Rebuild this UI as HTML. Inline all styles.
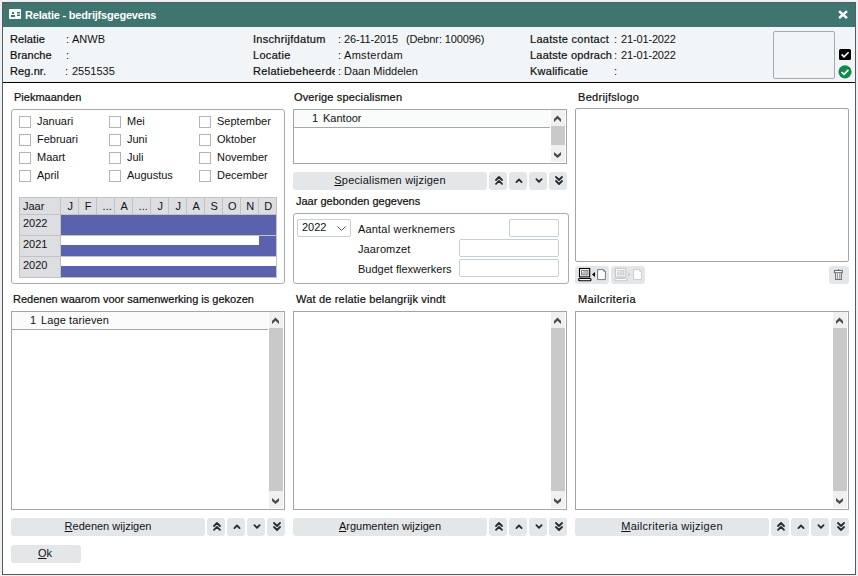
<!DOCTYPE html>
<html><head><meta charset="utf-8"><style>
*{box-sizing:border-box;margin:0;padding:0}
html,body{width:858px;height:576px;overflow:hidden;background:#eef1f4;font-family:"Liberation Sans",sans-serif;font-size:11px;color:#111;}
.a{position:absolute}
.t{position:absolute;line-height:13px;white-space:nowrap}
.m{-webkit-text-stroke-width:0.22px}
.gbox{position:absolute;border:1px solid #ababab;border-radius:3px}
.cb{position:absolute;width:12px;height:12px;border:1px solid #b4b4b4;background:#fff}
.lst{position:absolute;border:1px solid #a4a4a4;background:#fff}
.btn{position:absolute;background:#e3e7ea;border-radius:3px;height:18px;line-height:16px;text-align:center;white-space:nowrap}
.sbtn{position:absolute;background:#e3e7ea;border-radius:3px;height:18px;width:18px}
.inp{position:absolute;border:1px solid #c7cfd7;border-radius:2px;background:#fff}
.u{text-decoration:underline;text-underline-offset:1px}
svg{position:absolute;overflow:visible}
</style></head><body>
<div class="a" style="left:2px;top:2px;width:854px;height:573px;border:1px solid #5a5a5a;background:#fff"></div>
<div class="a" style="left:3px;top:3px;width:852px;height:24px;background:#3e756e"></div>
<div class="a" style="left:3px;top:27px;width:852px;height:55px;background:#f2f5f8"></div>
<div class="a" style="left:3px;top:82px;width:852px;height:1px;background:#000"></div>
<svg style="left:9px;top:9px" width="12" height="10" viewBox="0 0 12 10"><rect x="0" y="0" width="12" height="10" rx="1" fill="#fff"/><rect x="3" y="3" width="2" height="2" fill="#3e756e"/><rect x="2" y="6" width="4" height="2" fill="#3e756e"/><rect x="8" y="3" width="3" height="1" fill="#3e756e"/><rect x="8" y="4" width="3" height="2" fill="#9dbab6"/><rect x="8" y="6" width="3" height="1" fill="#3e756e"/></svg>
<div class="t" style="left:25px;top:9px;color:#fff;font-weight:bold;letter-spacing:-0.2px;-webkit-text-stroke-width:0">Relatie - bedrijfsgegevens</div>
<svg style="left:838px;top:10px" width="10" height="9" viewBox="0 0 10 9"><path d="M1.1 1.1 L9 8.1 M9 1.1 L1.1 8.1" stroke="#fff" stroke-width="2.6" stroke-linecap="butt"/></svg>
<div class="t m" style="left:10px;top:33px;letter-spacing:0.1px;">Relatie</div>
<div class="t" style="left:66px;top:33px;">:</div>
<div class="t" style="left:72px;top:33px;">ANWB</div>
<div class="t m" style="left:10px;top:49px;letter-spacing:0.1px;">Branche</div>
<div class="t" style="left:66px;top:49px;">:</div>
<div class="t m" style="left:10px;top:65px;letter-spacing:0.1px;">Reg.nr.</div>
<div class="t" style="left:65px;top:65px;">:</div>
<div class="t" style="left:72px;top:65px;">2551535</div>
<div class="t" style="left:406px;top:33px;letter-spacing:-0.12px;">(Debnr: 100096)</div>
<div class="t m" style="left:253px;top:33px;width:82px;overflow:hidden;letter-spacing:0.3px">Inschrijfdatum</div>
<div class="t" style="left:338px;top:33px;">:</div>
<div class="t" style="left:344px;top:33px;letter-spacing:-0.15px;">26-11-2015</div>
<div class="t m" style="left:253px;top:49px;width:82px;overflow:hidden;letter-spacing:0.3px">Locatie</div>
<div class="t" style="left:338px;top:49px;">:</div>
<div class="t" style="left:344px;top:49px;letter-spacing:0.3px;">Amsterdam</div>
<div class="t m" style="left:253px;top:65px;width:82px;overflow:hidden;letter-spacing:0.3px">Relatiebeheerder</div>
<div class="t" style="left:338px;top:65px;">:</div>
<div class="t" style="left:344px;top:65px;">Daan Middelen</div>
<div class="t m" style="left:530px;top:33px;letter-spacing:0.3px">Laatste contact</div>
<div class="t" style="left:614px;top:33px;">:</div>
<div class="t" style="left:621px;top:33px;letter-spacing:-0.15px;">21-01-2022</div>
<div class="t m" style="left:530px;top:49px;letter-spacing:0.22px">Laatste opdrach</div>
<div class="t" style="left:614px;top:49px;">:</div>
<div class="t" style="left:621px;top:49px;letter-spacing:-0.15px;">21-01-2022</div>
<div class="t m" style="left:530px;top:65px;letter-spacing:0.25px">Kwalificatie</div>
<div class="t" style="left:614px;top:65px;">:</div>
<div class="a" style="left:773px;top:31px;width:62px;height:48px;border:1px solid #a9a9a9;border-radius:2px"></div>
<svg style="left:839px;top:49px" width="12" height="11" viewBox="0 0 12 11"><rect x="0" y="0" width="12" height="11" rx="1.5" fill="#000"/><path d="M2.6 5.4 L5 7.8 L9.6 3.2" stroke="#fff" stroke-width="1.6" fill="none"/></svg>
<svg style="left:838px;top:65px" width="14" height="14" viewBox="0 0 14 14"><circle cx="7" cy="6.8" r="6.6" fill="#118a4a"/><path d="M3.6 7 L6 9.3 L10.4 4.9" stroke="#fff" stroke-width="1.7" fill="none"/></svg>
<div class="t m" style="left:14px;top:91px;">Piekmaanden</div>
<div class="gbox" style="left:11px;top:109px;width:274px;height:175px"></div>
<div class="cb" style="left:19px;top:116px"></div>
<div class="t" style="left:37px;top:115px;">Januari</div>
<div class="cb" style="left:19px;top:134px"></div>
<div class="t" style="left:37px;top:133px;">Februari</div>
<div class="cb" style="left:19px;top:152px"></div>
<div class="t" style="left:37px;top:151px;">Maart</div>
<div class="cb" style="left:19px;top:170px"></div>
<div class="t" style="left:37px;top:169px;">April</div>
<div class="cb" style="left:109px;top:116px"></div>
<div class="t" style="left:127px;top:115px;">Mei</div>
<div class="cb" style="left:109px;top:134px"></div>
<div class="t" style="left:127px;top:133px;">Juni</div>
<div class="cb" style="left:109px;top:152px"></div>
<div class="t" style="left:127px;top:151px;">Juli</div>
<div class="cb" style="left:109px;top:170px"></div>
<div class="t" style="left:127px;top:169px;">Augustus</div>
<div class="cb" style="left:199px;top:116px"></div>
<div class="t" style="left:217px;top:115px;">September</div>
<div class="cb" style="left:199px;top:134px"></div>
<div class="t" style="left:217px;top:133px;">Oktober</div>
<div class="cb" style="left:199px;top:152px"></div>
<div class="t" style="left:217px;top:151px;">November</div>
<div class="cb" style="left:199px;top:170px"></div>
<div class="t" style="left:217px;top:169px;">December</div>
<div class="a" style="left:19px;top:197px;width:258px;height:81px;background:#fff;border:1px solid #c2c2c2"></div>
<div class="a" style="left:20px;top:198px;width:256px;height:16px;background:#dddee2"></div>
<div class="a" style="left:20px;top:215px;width:40px;height:62px;background:#dddee2"></div>
<div class="a" style="left:19px;top:214px;width:258px;height:1px;background:#c2c2c2"></div>
<div class="a" style="left:19px;top:235px;width:42px;height:1px;background:#c2c2c2"></div>
<div class="a" style="left:19px;top:256px;width:42px;height:1px;background:#c2c2c2"></div>
<div class="a" style="left:60px;top:197px;width:1px;height:81px;background:#c2c2c2"></div>
<div class="a" style="left:78px;top:197px;width:1px;height:18px;background:#c2c2c2"></div>
<div class="a" style="left:96px;top:197px;width:1px;height:18px;background:#c2c2c2"></div>
<div class="a" style="left:114px;top:197px;width:1px;height:18px;background:#c2c2c2"></div>
<div class="a" style="left:132px;top:197px;width:1px;height:18px;background:#c2c2c2"></div>
<div class="a" style="left:150px;top:197px;width:1px;height:18px;background:#c2c2c2"></div>
<div class="a" style="left:168px;top:197px;width:1px;height:18px;background:#c2c2c2"></div>
<div class="a" style="left:186px;top:197px;width:1px;height:18px;background:#c2c2c2"></div>
<div class="a" style="left:204px;top:197px;width:1px;height:18px;background:#c2c2c2"></div>
<div class="a" style="left:222px;top:197px;width:1px;height:18px;background:#c2c2c2"></div>
<div class="a" style="left:240px;top:197px;width:1px;height:18px;background:#c2c2c2"></div>
<div class="a" style="left:258px;top:197px;width:1px;height:18px;background:#c2c2c2"></div>
<div class="a" style="left:61px;top:215px;width:215px;height:20px;background:#5a62ad"></div>
<div class="a" style="left:61px;top:236px;width:215px;height:20px;background:#5a62ad"></div>
<div class="a" style="left:61px;top:236px;width:198px;height:9px;background:#fff"></div>
<div class="a" style="left:61px;top:257px;width:215px;height:20px;background:#5a62ad"></div>
<div class="a" style="left:61px;top:257px;width:215px;height:9px;background:#fff"></div>
<div class="a" style="left:61px;top:235px;width:215px;height:1px;background:#c2c2c2"></div>
<div class="a" style="left:61px;top:256px;width:215px;height:1px;background:#c2c2c2"></div>
<div class="t" style="left:23px;top:200px;">Jaar</div>
<div class="t" style="left:61.7px;top:200px;width:17px;text-align:center">J</div>
<div class="t" style="left:79.7px;top:200px;width:17px;text-align:center">F</div>
<div class="t" style="left:98.7px;top:200px;width:17px;text-align:center">...</div>
<div class="t" style="left:115.7px;top:200px;width:17px;text-align:center">A</div>
<div class="t" style="left:134.7px;top:200px;width:17px;text-align:center">...</div>
<div class="t" style="left:151.7px;top:200px;width:17px;text-align:center">J</div>
<div class="t" style="left:169.7px;top:200px;width:17px;text-align:center">J</div>
<div class="t" style="left:187.7px;top:200px;width:17px;text-align:center">A</div>
<div class="t" style="left:205.7px;top:200px;width:17px;text-align:center">S</div>
<div class="t" style="left:223.7px;top:200px;width:17px;text-align:center">O</div>
<div class="t" style="left:241.7px;top:200px;width:17px;text-align:center">N</div>
<div class="t" style="left:259.7px;top:200px;width:17px;text-align:center">D</div>
<div class="t" style="left:23px;top:217px;">2022</div>
<div class="t" style="left:23px;top:238px;">2021</div>
<div class="t" style="left:23px;top:259px;">2020</div>
<div class="t m" style="left:294px;top:91px;letter-spacing:0.15px;">Overige specialismen</div>
<div class="lst" style="left:293px;top:109px;width:274px;height:55px"></div>
<div class="a" style="left:551px;top:110px;width:14px;height:52px;background:#f0f0f0"></div>
<div class="a" style="left:551px;top:126px;width:14px;height:19px;background:#c9c9c9"></div>
<svg style="left:551px;top:109px" width="14" height="16" viewBox="551 109 14 16"><path d="M554 119 L557.5 115.6 L561 119 V122 L557.5 118.7 L554 122 Z" fill="#4a4a4a"/></svg>
<svg style="left:551px;top:148px" width="14" height="16" viewBox="551 148 14 16"><path d="M554 152 L557.5 155.1 L561 152 V155 L557.5 158 L554 155 Z" fill="#4a4a4a"/></svg>
<div class="a" style="left:294px;top:110px;width:256px;height:17px;background:#fafbfb"></div>
<div class="a" style="left:294px;top:127px;width:256px;height:1px;background:#a8a8a8"></div>
<div class="t" style="left:312px;top:112px;">1</div>
<div class="t" style="left:323px;top:112px;">Kantoor</div>
<div class="btn" style="left:293px;top:172px;width:194px"><span style="letter-spacing:0.18px"><span class="u">S</span>pecialismen wijzigen</span></div>
<div class="sbtn" style="left:489px;top:172px"></div>
<svg style="left:494.5px;top:176px" width="8" height="10" viewBox="0 0 8 10"><path d="M1 4 L4 1 L7 4 M1 7.8 L4 4.8 L7 7.8" stroke="#262c31" stroke-width="1.8" stroke-linecap="round" stroke-linejoin="round" fill="none"/></svg>
<div class="sbtn" style="left:509px;top:172px"></div>
<svg style="left:514.5px;top:176px" width="8" height="10" viewBox="0 0 8 10"><path d="M1.4 6.1 L4 3.5 L6.6 6.1" stroke="#262c31" stroke-width="1.8" stroke-linecap="round" stroke-linejoin="round" fill="none"/></svg>
<div class="sbtn" style="left:529px;top:172px"></div>
<svg style="left:534.5px;top:176px" width="8" height="10" viewBox="0 0 8 10"><path d="M1.4 3.2 L4 5.8 L6.6 3.2" stroke="#262c31" stroke-width="1.8" stroke-linecap="round" stroke-linejoin="round" fill="none"/></svg>
<div class="sbtn" style="left:549px;top:172px"></div>
<svg style="left:554.5px;top:176px" width="8" height="10" viewBox="0 0 8 10"><path d="M1 1 L4 4 L7 1 M1 5 L4 8 L7 5" stroke="#262c31" stroke-width="1.8" stroke-linecap="round" stroke-linejoin="round" fill="none"/></svg>
<div class="t m" style="left:296px;top:195px;">Jaar gebonden gegevens</div>
<div class="gbox" style="left:293px;top:213px;width:276px;height:71px"></div>
<div class="inp" style="left:297px;top:219px;width:54px;height:18px"></div>
<div class="t" style="left:302px;top:221px;">2022</div>
<svg style="left:337px;top:226px" width="9" height="5" viewBox="0 0 9 5"><path d="M0.5 0.5 L4.5 4.5 L8.5 0.5" stroke="#555" stroke-width="1" fill="none"/></svg>
<div class="t" style="left:358px;top:223px;letter-spacing:0.18px;">Aantal werknemers</div>
<div class="t" style="left:358px;top:243px;letter-spacing:0.12px;">Jaaromzet</div>
<div class="t" style="left:358px;top:263px;">Budget flexwerkers</div>
<div class="inp" style="left:509px;top:219px;width:50px;height:18px"></div>
<div class="inp" style="left:459px;top:239px;width:100px;height:18px"></div>
<div class="inp" style="left:459px;top:259px;width:100px;height:18px"></div>
<div class="t m" style="left:578px;top:91px;letter-spacing:0.3px;">Bedrijfslogo</div>
<div class="a" style="left:575px;top:108px;width:274px;height:154px;border:1px solid #a4a4a4;border-radius:2px;background:#fff"></div>
<div class="sbtn" style="left:575px;top:266px;width:34px"></div>
<div class="sbtn" style="left:611px;top:266px;width:34px"></div>
<div class="sbtn" style="left:829px;top:266px;width:20px"></div>
<svg style="left:576px;top:265px" width="32" height="18" viewBox="0 0 32 18"><rect x="3.5" y="3.5" width="10.2" height="8.4" fill="#fff" stroke="#000" stroke-width="1.1"/><rect x="5.5" y="5.5" width="6.5" height="4.4" fill="#b9b9b9" stroke="#8a8a8a" stroke-width="1"/><rect x="6" y="6" width="1.2" height="1.2" fill="#fff"/><rect x="6" y="12" width="5" height="1" fill="#8a8a8a"/><rect x="2.6" y="13.5" width="12.4" height="2.3" rx="1" fill="#fff" stroke="#000" stroke-width="1.1"/><path d="M16 9.5 L19 7 V12 Z" fill="#000"/><path d="M21.6 4.6 H27.6 L29.4 6.4 V14.6 H21.6 Z" fill="#fff" stroke="#7a7a7a" stroke-width="1"/><path d="M27.6 4.6 V6.4 H29.4" fill="none" stroke="#7a7a7a" stroke-width="0.8"/></svg>
<svg style="left:612px;top:265px" width="32" height="18" viewBox="0 0 32 18"><rect x="3.5" y="3.5" width="10.2" height="8.4" fill="#fff" stroke="#c8c8c8" stroke-width="1.1"/><rect x="5.5" y="5.5" width="6.5" height="4.4" fill="#dcdcdc" stroke="#cfcfcf" stroke-width="1"/><rect x="6" y="6" width="1.2" height="1.2" fill="#fff"/><rect x="6" y="12" width="5" height="1" fill="#cfcfcf"/><rect x="2.6" y="13.5" width="12.4" height="2.3" rx="1" fill="#fff" stroke="#c8c8c8" stroke-width="1.1"/><path d="M19 9.5 L16 7 V12 Z" fill="#cfcfcf"/><path d="M21.6 4.6 H27.6 L29.4 6.4 V14.6 H21.6 Z" fill="#fff" stroke="#cdcdcd" stroke-width="1"/><path d="M27.6 4.6 V6.4 H29.4" fill="none" stroke="#cdcdcd" stroke-width="0.8"/></svg>
<svg style="left:828px;top:264px" width="22" height="22" viewBox="0 0 22 22"><rect x="6.45" y="6.5" width="7.9" height="2.2" fill="#fff" stroke="#707070" stroke-width="1.1"/><rect x="9.9" y="5" width="1.2" height="1.5" fill="#707070"/><path d="M7.65 9 V15.5 H13.35 V9" fill="#fff" stroke="#707070" stroke-width="1.1"/><path d="M9.65 9 V15 M11.75 9 V15" stroke="#808080" stroke-width="0.9"/></svg>
<div class="t m" style="left:13px;top:293px;">Redenen waarom voor samenwerking is gekozen</div>
<div class="lst" style="left:11px;top:311px;width:274px;height:199px"></div>
<div class="a" style="left:269px;top:312px;width:14px;height:196px;background:#f0f0f0"></div>
<div class="a" style="left:269px;top:328px;width:14px;height:163px;background:#c9c9c9"></div>
<svg style="left:269px;top:311px" width="14" height="16" viewBox="269 311 14 16"><path d="M272 321 L275.5 317.6 L279 321 V324 L275.5 320.7 L272 324 Z" fill="#4a4a4a"/></svg>
<svg style="left:269px;top:494px" width="14" height="16" viewBox="269 494 14 16"><path d="M272 498 L275.5 501.1 L279 498 V501 L275.5 504 L272 501 Z" fill="#4a4a4a"/></svg>
<div class="a" style="left:12px;top:312px;width:256px;height:17px;background:#fafbfb"></div>
<div class="a" style="left:12px;top:329px;width:256px;height:1px;background:#a8a8a8"></div>
<div class="t" style="left:30px;top:314px;">1</div>
<div class="t" style="left:41px;top:314px;letter-spacing:0.1px;">Lage tarieven</div>
<div class="btn" style="left:11px;top:518px;width:194px"><span class="u">R</span>edenen wijzigen</div>
<div class="sbtn" style="left:207px;top:518px"></div>
<svg style="left:212.5px;top:522px" width="8" height="10" viewBox="0 0 8 10"><path d="M1 4 L4 1 L7 4 M1 7.8 L4 4.8 L7 7.8" stroke="#262c31" stroke-width="1.8" stroke-linecap="round" stroke-linejoin="round" fill="none"/></svg>
<div class="sbtn" style="left:227px;top:518px"></div>
<svg style="left:232.5px;top:522px" width="8" height="10" viewBox="0 0 8 10"><path d="M1.4 6.1 L4 3.5 L6.6 6.1" stroke="#262c31" stroke-width="1.8" stroke-linecap="round" stroke-linejoin="round" fill="none"/></svg>
<div class="sbtn" style="left:247px;top:518px"></div>
<svg style="left:252.5px;top:522px" width="8" height="10" viewBox="0 0 8 10"><path d="M1.4 3.2 L4 5.8 L6.6 3.2" stroke="#262c31" stroke-width="1.8" stroke-linecap="round" stroke-linejoin="round" fill="none"/></svg>
<div class="sbtn" style="left:267px;top:518px"></div>
<svg style="left:272.5px;top:522px" width="8" height="10" viewBox="0 0 8 10"><path d="M1 1 L4 4 L7 1 M1 5 L4 8 L7 5" stroke="#262c31" stroke-width="1.8" stroke-linecap="round" stroke-linejoin="round" fill="none"/></svg>
<div class="t m" style="left:296px;top:293px;letter-spacing:0.18px;">Wat de relatie belangrijk vindt</div>
<div class="lst" style="left:293px;top:311px;width:274px;height:199px"></div>
<div class="a" style="left:551px;top:312px;width:14px;height:196px;background:#f0f0f0"></div>
<div class="a" style="left:551px;top:328px;width:14px;height:163px;background:#c9c9c9"></div>
<svg style="left:551px;top:311px" width="14" height="16" viewBox="551 311 14 16"><path d="M554 321 L557.5 317.6 L561 321 V324 L557.5 320.7 L554 324 Z" fill="#4a4a4a"/></svg>
<svg style="left:551px;top:494px" width="14" height="16" viewBox="551 494 14 16"><path d="M554 498 L557.5 501.1 L561 498 V501 L557.5 504 L554 501 Z" fill="#4a4a4a"/></svg>
<div class="btn" style="left:293px;top:518px;width:194px"><span class="u">A</span>rgumenten wijzigen</div>
<div class="sbtn" style="left:489px;top:518px"></div>
<svg style="left:494.5px;top:522px" width="8" height="10" viewBox="0 0 8 10"><path d="M1 4 L4 1 L7 4 M1 7.8 L4 4.8 L7 7.8" stroke="#262c31" stroke-width="1.8" stroke-linecap="round" stroke-linejoin="round" fill="none"/></svg>
<div class="sbtn" style="left:509px;top:518px"></div>
<svg style="left:514.5px;top:522px" width="8" height="10" viewBox="0 0 8 10"><path d="M1.4 6.1 L4 3.5 L6.6 6.1" stroke="#262c31" stroke-width="1.8" stroke-linecap="round" stroke-linejoin="round" fill="none"/></svg>
<div class="sbtn" style="left:529px;top:518px"></div>
<svg style="left:534.5px;top:522px" width="8" height="10" viewBox="0 0 8 10"><path d="M1.4 3.2 L4 5.8 L6.6 3.2" stroke="#262c31" stroke-width="1.8" stroke-linecap="round" stroke-linejoin="round" fill="none"/></svg>
<div class="sbtn" style="left:549px;top:518px"></div>
<svg style="left:554.5px;top:522px" width="8" height="10" viewBox="0 0 8 10"><path d="M1 1 L4 4 L7 1 M1 5 L4 8 L7 5" stroke="#262c31" stroke-width="1.8" stroke-linecap="round" stroke-linejoin="round" fill="none"/></svg>
<div class="t m" style="left:578px;top:293px;letter-spacing:0.4px;">Mailcriteria</div>
<div class="lst" style="left:575px;top:311px;width:274px;height:199px"></div>
<div class="a" style="left:833px;top:312px;width:14px;height:196px;background:#f0f0f0"></div>
<div class="a" style="left:833px;top:328px;width:14px;height:163px;background:#c9c9c9"></div>
<svg style="left:833px;top:311px" width="14" height="16" viewBox="833 311 14 16"><path d="M836 321 L839.5 317.6 L843 321 V324 L839.5 320.7 L836 324 Z" fill="#4a4a4a"/></svg>
<svg style="left:833px;top:494px" width="14" height="16" viewBox="833 494 14 16"><path d="M836 498 L839.5 501.1 L843 498 V501 L839.5 504 L836 501 Z" fill="#4a4a4a"/></svg>
<div class="btn" style="left:575px;top:518px;width:194px"><span style="letter-spacing:0.3px"><span class="u">M</span>ailcriteria wijzigen</span></div>
<div class="sbtn" style="left:771px;top:518px"></div>
<svg style="left:776.5px;top:522px" width="8" height="10" viewBox="0 0 8 10"><path d="M1 4 L4 1 L7 4 M1 7.8 L4 4.8 L7 7.8" stroke="#262c31" stroke-width="1.8" stroke-linecap="round" stroke-linejoin="round" fill="none"/></svg>
<div class="sbtn" style="left:791px;top:518px"></div>
<svg style="left:796.5px;top:522px" width="8" height="10" viewBox="0 0 8 10"><path d="M1.4 6.1 L4 3.5 L6.6 6.1" stroke="#262c31" stroke-width="1.8" stroke-linecap="round" stroke-linejoin="round" fill="none"/></svg>
<div class="sbtn" style="left:811px;top:518px"></div>
<svg style="left:816.5px;top:522px" width="8" height="10" viewBox="0 0 8 10"><path d="M1.4 3.2 L4 5.8 L6.6 3.2" stroke="#262c31" stroke-width="1.8" stroke-linecap="round" stroke-linejoin="round" fill="none"/></svg>
<div class="sbtn" style="left:831px;top:518px"></div>
<svg style="left:836.5px;top:522px" width="8" height="10" viewBox="0 0 8 10"><path d="M1 1 L4 4 L7 1 M1 5 L4 8 L7 5" stroke="#262c31" stroke-width="1.8" stroke-linecap="round" stroke-linejoin="round" fill="none"/></svg>
<div class="btn" style="left:11px;top:545px;width:70px;text-indent:-2px"><span class="u">O</span>k</div>
</body></html>
